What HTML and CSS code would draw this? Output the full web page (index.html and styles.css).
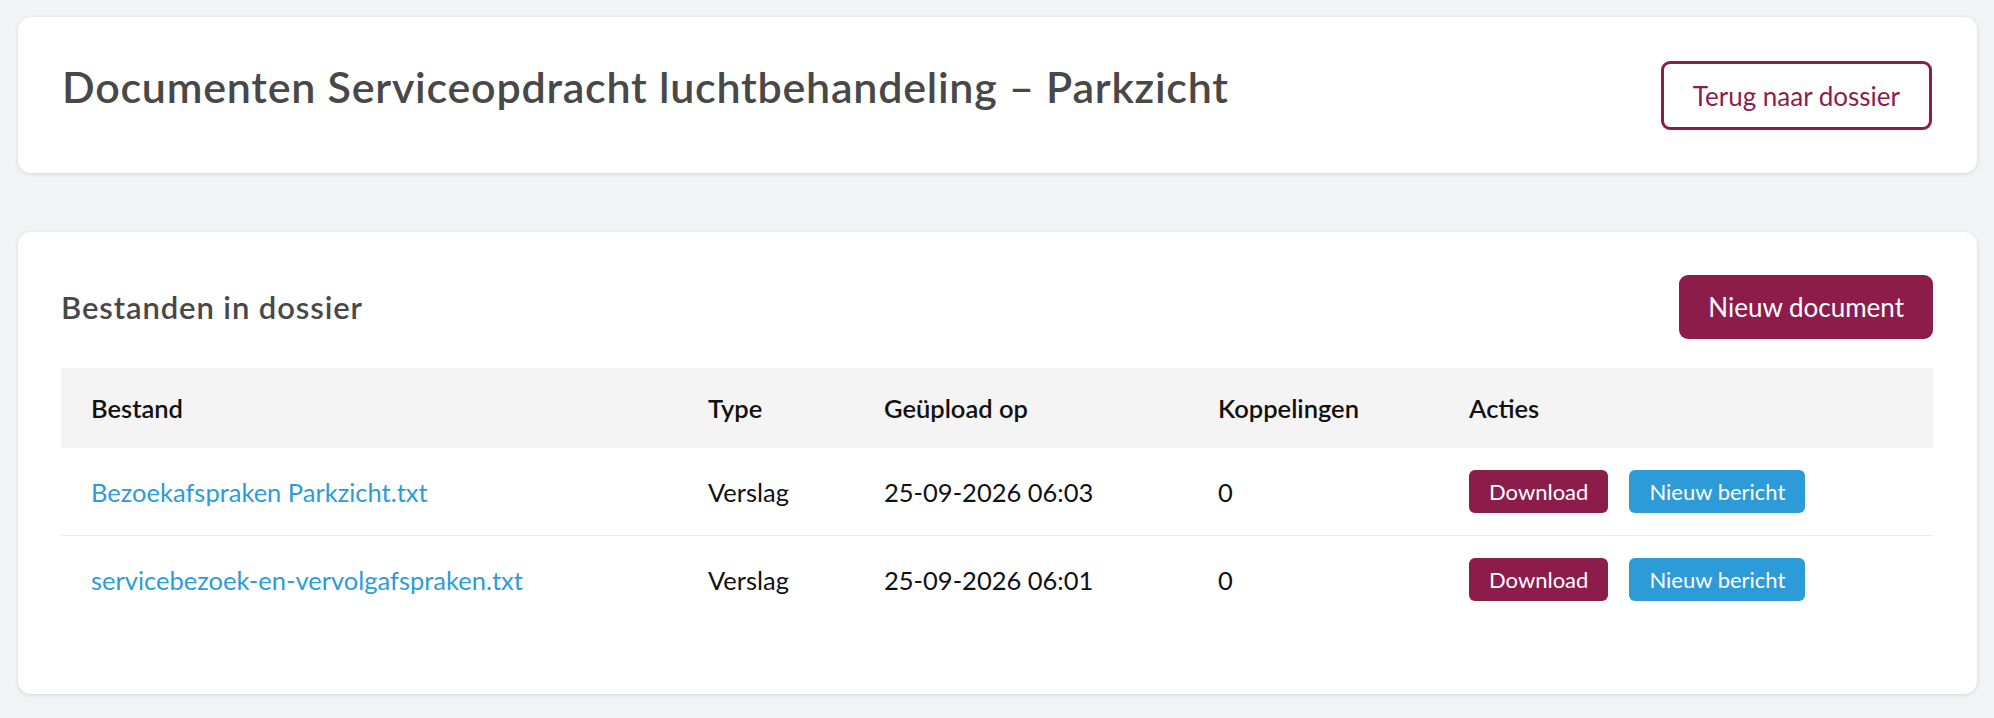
FILE: index.html
```html
<!DOCTYPE html>
<html lang="nl">
<head>
    <meta charset="UTF-8">
    <meta name="viewport" content="width=device-width, initial-scale=1.0">
    <title>Documenten Serviceopdracht luchtbehandeling – Parkzicht</title>
    <link rel="stylesheet" href="styles.css">
</head>
<body>
    <div class="card page-head">
        <h1 class="page-title">Documenten Serviceopdracht luchtbehandeling – Parkzicht</h1>
        <a class="btn btn-outline" href="#">Terug naar dossier</a>
    </div>

    <div class="card files">
        <div class="files-head">
            <h2 class="files-title">Bestanden in dossier</h2>
            <a class="btn btn-primary" href="#">Nieuw document</a>
        </div>

        <table class="file-table">
            <thead>
                <tr>
                    <th class="col-file">Bestand</th>
                    <th class="col-type">Type</th>
                    <th class="col-date">Geüpload op</th>
                    <th class="col-links">Koppelingen</th>
                    <th>Acties</th>
                </tr>
            </thead>
            <tbody>
                <tr>
                    <td><a class="file-link" href="#">Bezoekafspraken Parkzicht.txt</a></td>
                    <td>Verslag</td>
                    <td>25-09-2026 06:03</td>
                    <td>0</td>
                    <td>
                        <div class="actions">
                            <a class="btn-sm btn-maroon" href="#">Download</a>
                            <a class="btn-sm btn-blue" href="#">Nieuw bericht</a>
                        </div>
                    </td>
                </tr>
                <tr>
                    <td><a class="file-link" href="#">servicebezoek-en-vervolgafspraken.txt</a></td>
                    <td>Verslag</td>
                    <td>25-09-2026 06:01</td>
                    <td>0</td>
                    <td>
                        <div class="actions">
                            <a class="btn-sm btn-maroon" href="#">Download</a>
                            <a class="btn-sm btn-blue" href="#">Nieuw bericht</a>
                        </div>
                    </td>
                </tr>
            </tbody>
        </table>
    </div>
</body>
</html>
```

FILE: styles.css
```css
body {
    margin: 0;
    padding: 17px 17px 24px 18px;
    background: #f2f3f5;
    font-family: Lato, "Noto Sans", sans-serif;
    color: #111;
}
.card {
    background: #fff;
    border-radius: 13px;
    box-shadow: 0 1px 4px rgba(0, 0, 0, 0.12);
}
.page-head {
    display: flex;
    justify-content: space-between;
    align-items: flex-start;
    padding: 44px 45px 43px 44px;
}
.page-title {
    margin: 0;
    font-size: 43px;
    font-weight: 600;
    line-height: 1.2;
    letter-spacing: 0.75px;
    color: #484848;
}
.btn {
    display: inline-block;
    text-decoration: none;
    border-radius: 9px;
    font-size: 26px;
    line-height: 1;
    box-sizing: border-box;
}
.btn-outline {
    border: 3px solid #8c1d4b;
    color: #8c1d4b;
    padding: 20px 29px;
    height: 69px;
    display: flex;
    align-items: center;
}
.btn-primary {
    background: #8c1d4b;
    color: #fff;
    padding: 0 29px;
    height: 64px;
    display: flex;
    align-items: center;
}
.files {
    margin-top: 59px;
    padding: 43px 44px 71px 43px;
}
.files-head {
    display: flex;
    justify-content: space-between;
    align-items: center;
    margin-bottom: 29px;
}
.files-title {
    margin: 0;
    font-size: 31px;
    font-weight: 600;
    letter-spacing: 0.9px;
    color: #484848;
}
.file-table {
    width: 100%;
    border-collapse: collapse;
    table-layout: fixed;
    font-size: 25.5px;
}
.file-table th {
    background: #f4f4f4;
    text-align: left;
    font-weight: 600;
    height: 80px;
    padding: 0 30px;
}
.file-table td {
    padding: 22px 30px;
    border-bottom: 1px solid #ececec;
    height: 43px;
}
.file-table tbody tr:last-child td {
    border-bottom: none;
}
.col-file { width: 557px; }
.col-type { width: 116px; }
.col-date { width: 274px; }
.col-links { width: 191px; }
.file-link {
    color: #2e9bd9;
    text-decoration: none;
}
.actions {
    display: flex;
    gap: 21px;
}
.btn-sm {
    display: inline-flex;
    align-items: center;
    height: 43px;
    padding: 0 20px;
    border-radius: 6px;
    font-size: 22px;
    color: #fff;
    text-decoration: none;
    box-sizing: border-box;
}
.btn-maroon { background: #8c1d4b; }
.btn-blue { background: #2e9bd9; }
```
